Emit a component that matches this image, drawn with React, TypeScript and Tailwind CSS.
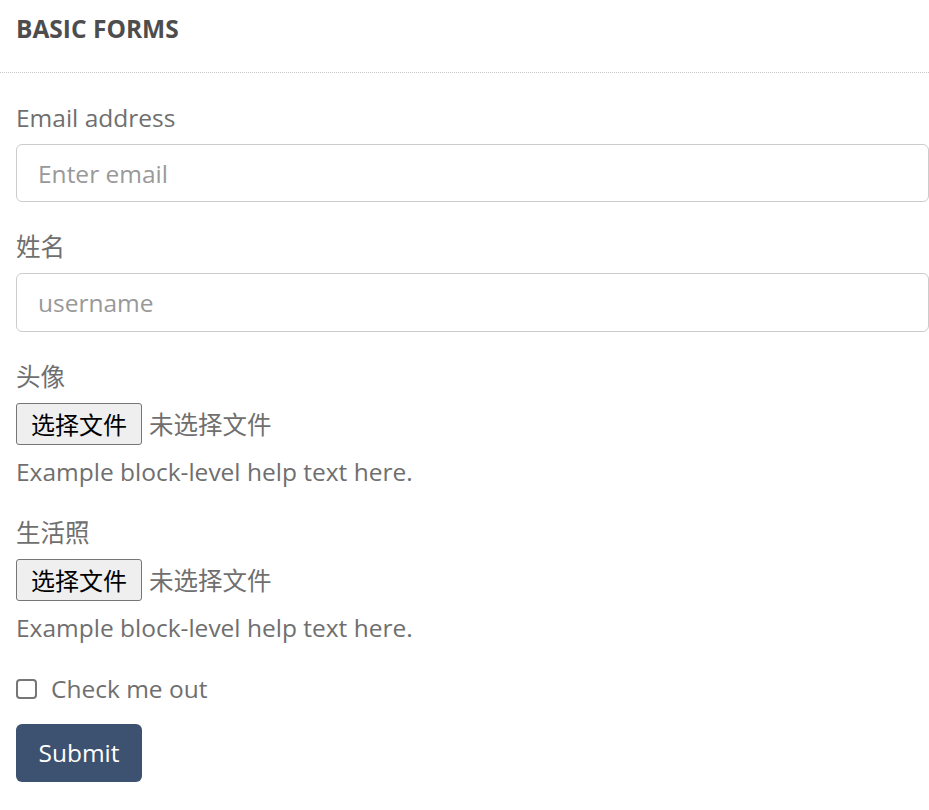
const font = { fontFamily: '"Open Sans", "Noto Sans CJK SC", sans-serif' };

const Label = ({ children }: { children: React.ReactNode }) => (
  <label className="block text-[24.5px] leading-[34px] text-[#6f6f6f]">{children}</label>
);

const FileField = ({ label }: { label: string }) => (
  <div className="mb-[27px]">
    <Label>{label}</Label>
    <div className="mt-[9px] flex items-center gap-[7px]">
      <button
        type="button"
        className="h-[42px] w-[126px] rounded-[3px] border border-[#767676] bg-[#efefef] text-[24px] leading-none text-black"
        style={{ fontFamily: '"Noto Sans CJK SC", sans-serif' }}
      >
        选择文件
      </button>
      <span
        className="text-[24.5px] leading-none text-[#6f6f6f]"
        style={{ fontFamily: '"Noto Sans CJK SC", sans-serif' }}
      >
        未选择文件
      </span>
    </div>
    <p className="mt-[10px] text-[24.5px] leading-[34px] text-[#6f6f6f]">Example block-level help text here.</p>
  </div>
);

export default function App() {
  return (
    <div className="min-h-screen w-[929px] bg-white" style={font}>
      <div className="flex h-[73px] items-start border-b border-dotted border-[#c8c8c8] pl-4 pt-[12px]">
        <h2 className="text-[24.5px] font-bold leading-[34px] text-[#4d4d4d]">BASIC FORMS</h2>
      </div>
      <form className="pl-4 pt-[28px]">
        <div className="mb-[28px]">
          <Label>Email address</Label>
          <input
            type="email"
            placeholder="Enter email"
            className="mt-[9px] block h-[58px] w-full rounded-[6px] border border-[#cccccc] px-[21px] text-[24.5px] text-[#555] outline-none placeholder:text-[#999]"
          />
        </div>
        <div className="mb-[28px]">
          <Label>姓名</Label>
          <input
            type="text"
            placeholder="username"
            className="mt-[9px] block h-[59px] w-full rounded-[6px] border border-[#cccccc] px-[21px] text-[24.5px] text-[#555] outline-none placeholder:text-[#999]"
          />
        </div>
        <FileField label="头像" />
        <FileField label="生活照" />
        <label className="flex items-center gap-[14px] text-[24.5px] leading-[34px] text-[#6f6f6f]">
          <span className="h-[20px] w-[21px] rounded-[4px] border-2 border-[#767676] bg-white" />
          Check me out
        </label>
        <button
          type="button"
          className="mt-[18px] h-[58px] w-[126px] rounded-[6px] bg-[#3d5170] text-[24.5px] text-white"
        >
          Submit
        </button>
      </form>
    </div>
  );
}
